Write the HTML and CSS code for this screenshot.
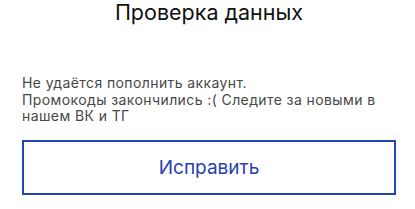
FILE: index.html
```html
<!DOCTYPE html>
<html lang="ru">
<head>
    <meta charset="UTF-8">
    <title>Проверка данных</title>
    <link rel="stylesheet" href="styles.css">
</head>
<body>
    <div class="dialog">
        <h1 class="dialog-title">Проверка данных</h1>
        <p class="dialog-text">Не удаётся пополнить аккаунт.<br>Промокоды закончились :( Следите за новыми в нашем ВК и ТГ</p>
        <button type="button" class="dialog-button">Исправить</button>
    </div>
</body>
</html>
```

FILE: styles.css
```css
body { margin: 0; padding: 0; background: #fff; font-family: Inter, "Noto Sans", sans-serif; }
.dialog { padding: 0 19px 0 22px; }
.dialog-title { margin: 0; font-size: 21.5px; font-weight: 400; line-height: 25px; text-align: center; color: #111; }
.dialog-text { max-width: 362px; margin: 50px 0 0; font-size: 14px; line-height: 16.5px; letter-spacing: 0.4px; color: #474747; }
.dialog-button { display: block; width: 100%; height: 55px; margin-top: 15px; background: #fff; border: 2px solid #2443b4; color: #2a40b0; font-family: inherit; font-size: 19px; cursor: pointer; }
```
